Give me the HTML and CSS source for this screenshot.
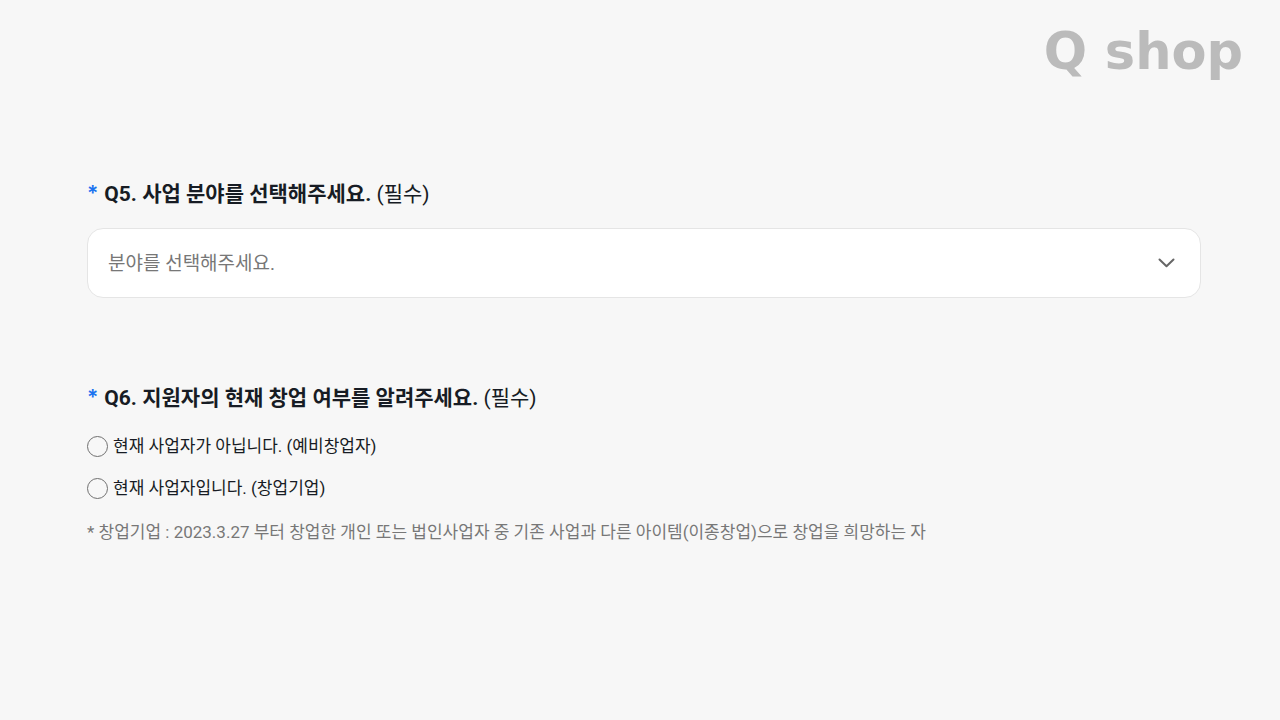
FILE: index.html
```html
<!DOCTYPE html>
<html lang="ko">
<head>
<meta charset="utf-8">
<meta name="viewport" content="width=device-width, initial-scale=1">
<title>Q shop</title>
<link rel="stylesheet" href="styles.css">
</head>
<body>
<header class="header">
  <div class="logo">Q shop</div>
</header>
<main>
  <form class="form">
    <section class="question">
      <label class="title" for="field"><span class="star">*</span><span><strong>Q5. 사업 분야를 선택해주세요.</strong> (필수)</span></label>
      <div class="select-box">
        <select class="select" id="field" required>
          <option value="">분야를 선택해주세요.</option>
        </select>
        <svg class="chevron" viewBox="0 0 18 12" aria-hidden="true"><path d="M2.5 2.5 9.5 9.3 16.5 2.5"/></svg>
      </div>
    </section>
    <fieldset class="question">
      <legend class="title"><span class="star">*</span><span><strong>Q6. 지원자의 현재 창업 여부를 알려주세요.</strong> (필수)</span></legend>
      <div class="options">
        <label class="option"><input class="radio" type="radio" name="status">현재 사업자가 아닙니다. (예비창업자)</label>
        <label class="option"><input class="radio" type="radio" name="status">현재 사업자입니다. (창업기업)</label>
      </div>
      <p class="note">* 창업기업 : 2023.3.27 부터 창업한 개인 또는 법인사업자 중 기존 사업과 다른 아이템(이종창업)으로 창업을 희망하는 자</p>
    </fieldset>
  </form>
</main>
</body>
</html>
```
FILE: styles.css
```css
* {
  box-sizing: border-box;
}

body {
  margin: 0;
  background: #f7f7f7;
  color: #171c24;
  font-family: Roboto, "Noto Sans CJK KR", sans-serif;
}

.header {
  display: flex;
  justify-content: flex-end;
  padding: 22px 37px 0;
}

.logo {
  color: #bbb;
  font: bold 51px/60px "DejaVu Sans", sans-serif;
}

.form {
  display: flex;
  flex-direction: column;
  gap: 84px;
  padding: 96px 79px 40px 87px;
}

.question {
  min-width: 0;
  margin: 0;
  padding: 0;
  border: 0;
}

.title {
  display: flex;
  gap: 6px;
  padding: 0;
  margin-bottom: 18px;
  font-size: 21px;
  line-height: 32px;
}

.star {
  color: #1a73f0;
  font-family: Inter, sans-serif;
  font-weight: 600;
}

.select-box {
  position: relative;
}

.select {
  display: block;
  width: 100%;
  height: 70px;
  padding: 0 56px 0 20px;
  border: 1px solid #e5e5e5;
  border-radius: 16px;
  appearance: none;
  background: #fff;
  color: #777;
  font: inherit;
  font-size: 19px;
}

.chevron {
  position: absolute;
  top: 29px;
  right: 26px;
  width: 18px;
  height: 12px;
  fill: none;
  stroke: #666;
  stroke-width: 2;
  stroke-linecap: round;
  stroke-linejoin: round;
  pointer-events: none;
}

.options {
  display: flex;
  flex-direction: column;
  gap: 18px;
  padding-top: 2px;
}

.option {
  display: flex;
  align-items: center;
  gap: 5px;
  font-size: 17px;
  line-height: 24px;
}

.radio {
  flex: none;
  width: 21px;
  height: 21px;
  margin: 0;
  border: 1px solid #707070;
  border-radius: 50%;
  appearance: none;
}

.radio:checked {
  border: 6px solid #1a73f0;
}

.note {
  margin: 20px 0 0;
  color: #777;
  font-size: 17px;
  line-height: 24px;
}
```
